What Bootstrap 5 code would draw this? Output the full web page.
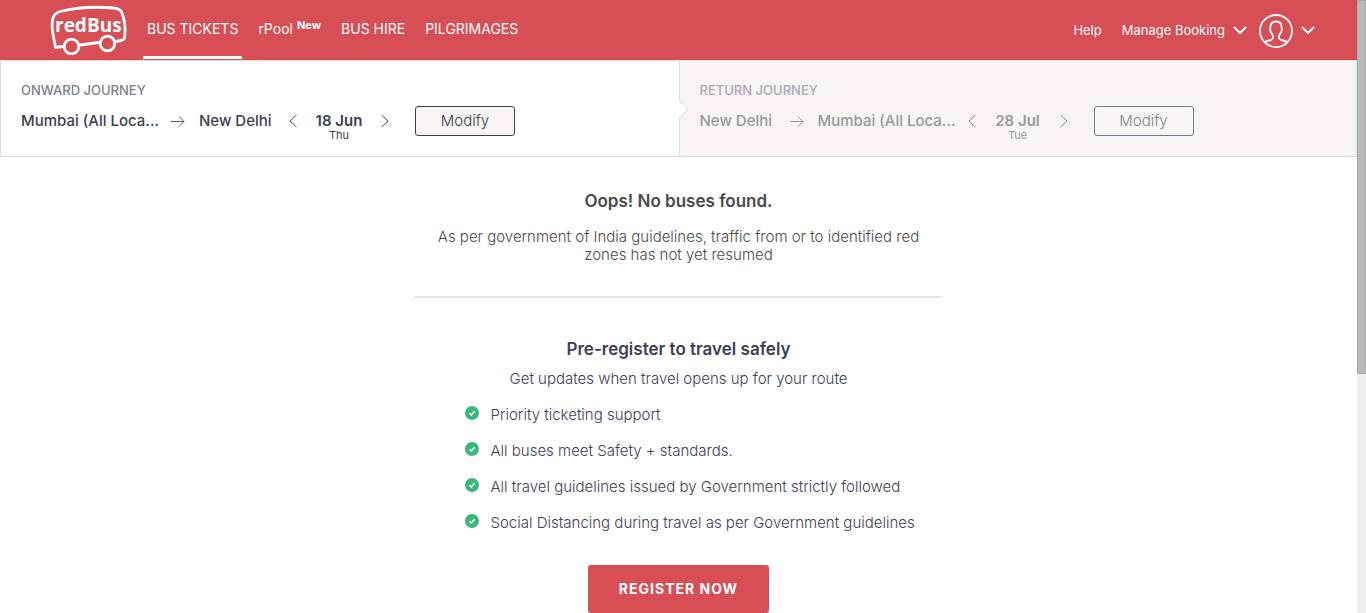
<!DOCTYPE html>
<html lang="en">
<head>
<meta charset="utf-8">
<meta name="viewport" content="width=device-width, initial-scale=1">
<title>redBus - Mumbai to New Delhi</title>
<link href="https://cdn.jsdelivr.net/npm/bootstrap@5.3.0/dist/css/bootstrap.min.css" rel="stylesheet">
<style>
  :root { --brand: #d84e55; --ink: #3e3e52; --line: #dcdcdc; }
  body { font-family: Inter, sans-serif; font-size: 15px; line-height: 18px; color: var(--ink); background: #fff; }
  svg { display: block; flex: none; fill: none; }
  a { color: inherit; text-decoration: none; }

  .site-bar { background: var(--brand); height: 60px; padding: 0 42px 0 50px; color: #fff; }
  .main-links { gap: 12px; font-size: 14px; margin-left: 16px; }
  .main-links a { display: flex; align-items: center; height: 58px; padding: 0 4px; border-bottom: 3px solid transparent; }
  .main-links a.current { border-color: #fff; }
  .new-tag { font-size: 11px; font-weight: 700; margin: -8px 0 0 4px; }
  .user-links { gap: 20px; font-size: 13px; }
  .user-links button { font-size: 13px; }
  .bare { background: none; border: 0; padding: 0; color: inherit; }

  .journeys { border: 1px solid var(--line); }
  .journey { height: 95px; padding: 20px 20px 0; }
  .journey h2 { font-size: 13px; line-height: 18px; font-weight: 500; color: #7e7e8c; margin: 0 0 6px; }
  .journey-return { background: #f7f4f3; border-left: 1px solid var(--line); position: relative; }
  .journey-return h2 { color: #a9a9b5; }
  .journey-return .route { color: #999; }
  .journey-return .route svg { opacity: .65; }
  .journey-return .modify { border-color: #77778a; color: #85858f; }
  .notch { position: absolute; left: -1px; top: 38px; }
  .route { gap: 14px; height: 32px; }
  .city { font-weight: 500; white-space: nowrap; }
  .city-long { width: 136px; }
  .city-short { width: 76px; }
  .date-picker { gap: 16px; }
  .date-box { width: 52px; text-align: center; height: 32px; padding-top: 8px; }
  .date-box strong { display: block; font-weight: 600; line-height: 16px; }
  .date-box small { display: block; font-size: 11px; line-height: 12px; }
  .modify { width: 100px; height: 30px; margin-left: 12px; padding: 0; border: 1px solid var(--ink); border-radius: 3px; background: #f7f4f3; color: var(--ink); font-weight: 300; line-height: 18px; }

  .notice { width: 529px; max-width: 100%; }
  .notice h1, .notice h3 { font-size: 17px; line-height: 22px; font-weight: 600; margin: 0; }
  .notice p { font-weight: 300; margin: 0; }
  .no-buses { color: #4a4a4a; padding: 33px 16px 32px; border-bottom: 2px solid #e6e6e6; }
  .no-buses p { margin-top: 16px; }
  .register { padding-top: 40px; }
  .register p { margin-top: 10px; }
  .perks { width: 428px; max-width: 100%; gap: 18px; margin: 18px auto 0; font-weight: 300; white-space: nowrap; }
  .perks li { gap: 12px; }
  .register-btn { background: var(--brand); color: #fff; border: 0; border-radius: 3px; width: 181px; height: 48px; margin-top: 33px; font-size: 14px; font-weight: 700; letter-spacing: 1px; }

  .scroll-track { width: 9px; height: 100vh; background: #eee; top: 0; }
  .scroll-thumb { height: 61%; background: #bababa; border: 1px solid #a8a8a8; }
</style>
</head>
<body>
<div class="d-flex align-items-start">
<div class="flex-grow-1 overflow-hidden">

  <header class="site-bar d-flex align-items-center justify-content-between">
    <div class="d-flex align-items-center">
      <a href="#" aria-label="redBus home">
        <svg width="77" height="50" viewBox="50 5 77 50" stroke="#fff" stroke-width="2.8" stroke-linecap="round" stroke-linejoin="round">
          <path d="M63.500 46.500L55.500 47.500L53 34Q51.500 27 52.500 20Q53.500 13.500 60 11.500Q85 5.500 113 8Q120 8.500 121.500 12Q126.500 24 124.500 38Q124 40 121 40.500L115.500 41.500M80 45L99 42.500"/>
          <circle cx="71.500" cy="46.500" r="7.300"/><circle cx="107.500" cy="43.500" r="7.300"/>
          <text x="55" y="32" font-family="Open Sans, sans-serif" font-weight="700" font-size="19" fill="#fff" stroke="none">redBus</text>
        </svg>
      </a>
      <nav class="main-links d-flex" aria-label="Services">
        <a class="current" href="#">BUS TICKETS</a>
        <a href="#">rPool <span class="new-tag">New</span></a>
        <a href="#">BUS HIRE</a>
        <a href="#">PILGRIMAGES</a>
      </nav>
    </div>
    <div class="user-links d-flex align-items-center">
      <a href="#">Help</a>
      <div class="d-flex align-items-center gap-2">
        <button class="bare" type="button">Manage Booking</button>
        <svg width="14" height="9" viewBox="0 0 14 9" stroke="#fff" stroke-width="2"><path d="M1 1L7 7L13 1"/></svg>
        <button class="bare d-flex align-items-center gap-2 ms-1" type="button" aria-label="Account">
          <svg width="34" height="36" viewBox="0 -2 34 36" stroke="#fff" stroke-width="1.800">
            <circle cx="17" cy="17" r="16"/>
            <path d="M6 28.500Q7 27 12 26Q14.500 25 14 22L12.500 19Q10.500 17 11.500 13Q11.500 7.500 17 7.500T22.500 13Q23.500 17 21.500 19L20 22Q19.500 25 22 26Q27 27 28 28.500"/>
          </svg>
          <svg width="14" height="9" viewBox="0 0 14 9" stroke="#fff" stroke-width="2"><path d="M1 1L7 7L13 1"/></svg>
        </button>
      </div>
    </div>
  </header>

  <section class="journeys row g-0" aria-label="Journeys">
    <div class="col-6 journey">
      <h2>ONWARD JOURNEY</h2>
      <div class="route d-flex align-items-center">
        <span class="city city-long">Mumbai (All Loca...</span>
        <svg width="14" height="12" viewBox="0 0 14 12" stroke="#5c5c66"><path d="M0 6.500H13M8 1.500L13 6.500L8 11.500"/></svg>
        <span class="city city-short">New Delhi</span>
        <div class="date-picker d-flex align-items-center">
          <button class="bare" type="button" aria-label="Previous day"><svg width="8" height="14" viewBox="0 0 8 14" stroke="#4a4a55"><path d="M7.500 1L1 7L7.500 13"/></svg></button>
          <div class="date-box"><strong>18 Jun</strong><small>Thu</small></div>
          <button class="bare" type="button" aria-label="Next day"><svg width="8" height="14" viewBox="0 0 8 14" stroke="#4a4a55"><path d="M.5 1L7 7L.5 13"/></svg></button>
        </div>
        <button class="modify" type="button">Modify</button>
      </div>
    </div>
    <div class="col-6 journey journey-return">
      <svg class="notch" width="10" height="20" viewBox="0 0 10 20"><path d="M0 1L9 10L0 19Z" fill="#fff"/><path d="M.5 1L9 10L.5 19" stroke="#dcdcdc"/></svg>
      <h2>RETURN JOURNEY</h2>
      <div class="route d-flex align-items-center">
        <span class="city city-short">New Delhi</span>
        <svg width="14" height="12" viewBox="0 0 14 12" stroke="#5c5c66"><path d="M0 6.500H13M8 1.500L13 6.500L8 11.500"/></svg>
        <span class="city city-long">Mumbai (All Loca...</span>
        <div class="date-picker d-flex align-items-center">
          <button class="bare" type="button" aria-label="Previous day"><svg width="8" height="14" viewBox="0 0 8 14" stroke="#4a4a55"><path d="M7.500 1L1 7L7.500 13"/></svg></button>
          <div class="date-box"><strong>28 Jul</strong><small>Tue</small></div>
          <button class="bare" type="button" aria-label="Next day"><svg width="8" height="14" viewBox="0 0 8 14" stroke="#4a4a55"><path d="M.5 1L7 7L.5 13"/></svg></button>
        </div>
        <button class="modify" type="button">Modify</button>
      </div>
    </div>
  </section>

  <main class="notice mx-auto text-center">
    <section class="no-buses">
      <h1>Oops! No buses found.</h1>
      <p>As per government of India guidelines, traffic from or to identified red zones has not yet resumed</p>
    </section>
    <section class="register">
      <h3>Pre-register to travel safely</h3>
      <p>Get updates when travel opens up for your route</p>
      <ul class="perks list-unstyled d-flex flex-column">
        <li class="d-flex"><svg width="14" height="14" viewBox="0 0 14 14"><circle cx="7" cy="7" r="7" fill="#38b87c"/><path d="M4.500 7.300L6.300 9L9.600 5.300" stroke="#fff" stroke-width="1.500"/></svg>Priority ticketing support</li>
        <li class="d-flex"><svg width="14" height="14" viewBox="0 0 14 14"><circle cx="7" cy="7" r="7" fill="#38b87c"/><path d="M4.500 7.300L6.300 9L9.600 5.300" stroke="#fff" stroke-width="1.500"/></svg>All buses meet Safety + standards.</li>
        <li class="d-flex"><svg width="14" height="14" viewBox="0 0 14 14"><circle cx="7" cy="7" r="7" fill="#38b87c"/><path d="M4.500 7.300L6.300 9L9.600 5.300" stroke="#fff" stroke-width="1.500"/></svg>All travel guidelines issued by Government strictly followed</li>
        <li class="d-flex"><svg width="14" height="14" viewBox="0 0 14 14"><circle cx="7" cy="7" r="7" fill="#38b87c"/><path d="M4.500 7.300L6.300 9L9.600 5.300" stroke="#fff" stroke-width="1.500"/></svg>Social Distancing during travel as per Government guidelines</li>
      </ul>
      <button class="register-btn" type="button">REGISTER NOW</button>
    </section>
  </main>

</div>
<div class="scroll-track flex-shrink-0 sticky-top" aria-hidden="true"><div class="scroll-thumb"></div></div>
</div>
<script src="https://cdn.jsdelivr.net/npm/bootstrap@5.3.0/dist/js/bootstrap.bundle.min.js"></script>
</body>
</html>
